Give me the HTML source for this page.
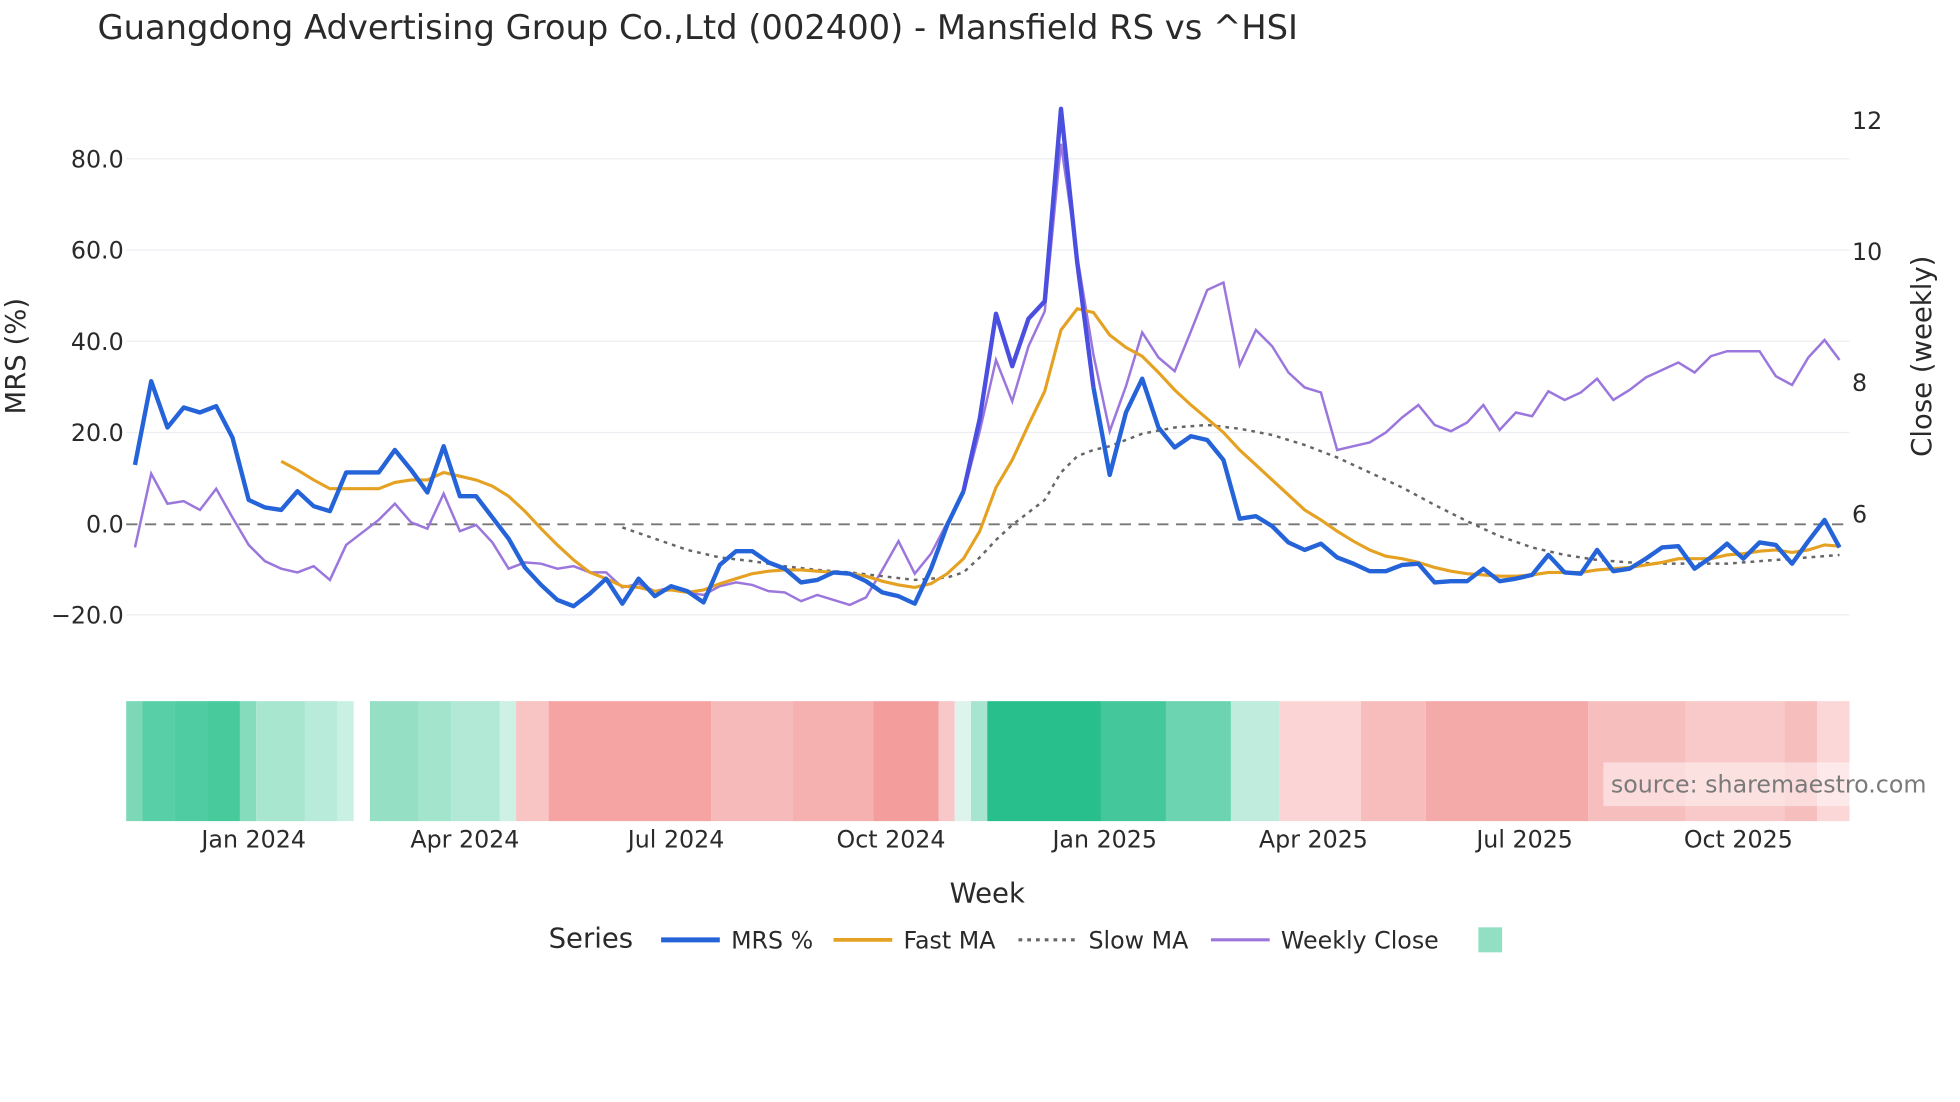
<!DOCTYPE html>
<html><head><meta charset="utf-8"><style>
html,body{margin:0;padding:0;background:#fff;width:1960px;height:1102px;overflow:hidden}
svg{display:block}
text{font-family:"DejaVu Sans","Liberation Sans",sans-serif;fill:#2a2a2a}
</style></head><body>
<svg width="1960" height="1102" viewBox="0 0 1568.4 881.7" xmlns="http://www.w3.org/2000/svg">
<rect width="1569" height="882" fill="#fff"/>
<text x="78" y="31" font-size="27" fill="#333">Guangdong Advertising Group Co.,Ltd (002400) - Mansfield RS vs ^HSI</text>
<g stroke="#eceef2" stroke-width="1">
<line x1="101" y1="127" x2="1480" y2="127"/><line x1="101" y1="200" x2="1480" y2="200"/>
<line x1="101" y1="273" x2="1480" y2="273"/><line x1="101" y1="346" x2="1480" y2="346"/>
<line x1="101" y1="492" x2="1480" y2="492"/></g>
<line x1="101" y1="419.5" x2="1480" y2="419.5" stroke="#777" stroke-width="1.5" stroke-dasharray="9,6"/>
<g font-size="19" text-anchor="end">
<text x="99" y="134">80.0</text><text x="99" y="207">60.0</text><text x="99" y="280">40.0</text>
<text x="99" y="353">20.0</text><text x="99" y="426">0.0</text><text x="99" y="499">−20.0</text></g>
<g font-size="19"><text x="1482" y="103">12</text><text x="1482" y="208">10</text><text x="1482" y="313">8</text><text x="1482" y="418">6</text></g>
<text transform="translate(20,285) rotate(-90)" font-size="22" text-anchor="middle">MRS (%)</text>
<text transform="translate(1545,285) rotate(-90)" font-size="22" text-anchor="middle">Close (weekly)</text>
<g>
<rect x="101" y="561" width="13" height="96" fill="#7dd8b8"/>
<rect x="114" y="561" width="26" height="96" fill="#58cfa7"/>
<rect x="140" y="561" width="26" height="96" fill="#4fcca1"/>
<rect x="166" y="561" width="26" height="96" fill="#48ca9d"/>
<rect x="192" y="561" width="13" height="96" fill="#85dcbc"/>
<rect x="205" y="561" width="39" height="96" fill="#a8e6d0"/>
<rect x="244" y="561" width="26" height="96" fill="#b8ebda"/>
<rect x="270" y="561" width="13" height="96" fill="#c8f0e3"/>
<rect x="296" y="561" width="39" height="96" fill="#95e0c5"/>
<rect x="335" y="561" width="26" height="96" fill="#a2e4cc"/>
<rect x="361" y="561" width="39" height="96" fill="#b2e9d6"/>
<rect x="400" y="561" width="13" height="96" fill="#cdf1e5"/>
<rect x="413" y="561" width="26" height="96" fill="#f8c4c4"/>
<rect x="439" y="561" width="130" height="96" fill="#f5a3a3"/>
<rect x="569" y="561" width="65" height="96" fill="#f7baba"/>
<rect x="634" y="561" width="65" height="96" fill="#f5b0b0"/>
<rect x="699" y="561" width="52" height="96" fill="#f49d9d"/>
<rect x="751" y="561" width="13" height="96" fill="#f8c8c8"/>
<rect x="764" y="561" width="13" height="96" fill="#dcf4ec"/>
<rect x="777" y="561" width="13" height="96" fill="#a8e5d0"/>
<rect x="790" y="561" width="91" height="96" fill="#28bf8d"/>
<rect x="881" y="561" width="52" height="96" fill="#44c89b"/>
<rect x="933" y="561" width="52" height="96" fill="#6cd4b0"/>
<rect x="985" y="561" width="39" height="96" fill="#c0ecdd"/>
<rect x="1024" y="561" width="65" height="96" fill="#fbd5d5"/>
<rect x="1089" y="561" width="52" height="96" fill="#f7bcbc"/>
<rect x="1141" y="561" width="130" height="96" fill="#f5aaaa"/>
<rect x="1271" y="561" width="78" height="96" fill="#f7bebe"/>
<rect x="1349" y="561" width="79" height="96" fill="#f9c8c8"/>
<rect x="1428" y="561" width="26" height="96" fill="#f7bebe"/>
<rect x="1454" y="561" width="26" height="96" fill="#fbd7d7"/>
</g>
<rect x="1283" y="610" width="262" height="35" fill="#fff" fill-opacity="0.45"/>
<text x="1289" y="634" font-size="19" style="fill:#7a7a7a">source: sharemaestro.com</text>
<g font-size="19" text-anchor="middle">
<text x="203" y="678">Jan 2024</text><text x="372" y="678">Apr 2024</text><text x="541" y="678">Jul 2024</text>
<text x="713" y="678">Oct 2024</text><text x="884" y="678">Jan 2025</text><text x="1051" y="678">Apr 2025</text>
<text x="1220" y="678">Jul 2025</text><text x="1391" y="678">Oct 2025</text></g>
<text x="790" y="722" font-size="22" text-anchor="middle">Week</text>
<polyline fill="none" stroke="#9b77dd" stroke-width="2" points="108,438 121,379 134,403 147,401 160,408 173,391 186,414 199,436 212,449 225,455 238,458 251,453 264,464 277,436 290,426 303,416 316,403 329,418 342,423 355,395 368,425 381,420 394,434 407,455 420,450 433,451 446,455 459,453 472,458 485,458 498,470 511,467 524,473 537,470 550,474 563,476 576,469 589,466 602,468 615,473 628,474 641,481 654,476 667,480 680,484 693,478 706,456 719,433 732,459 745,443 758,418 771,395 784,345 797,288 810,321 823,277 836,249 849,115 862,205 875,284 888,345 901,309 914,266 927,286 940,297 953,265 966,232 979,226 992,292 1005,264 1018,277 1031,298 1044,310 1057,314 1070,360 1083,357 1096,354 1109,346 1122,334 1135,324 1148,340 1161,345 1174,338 1187,324 1200,344 1213,330 1226,333 1239,313 1252,320 1265,314 1278,303 1291,320 1304,312 1317,302 1330,296 1343,290 1356,298 1369,285 1382,281 1395,281 1408,281 1421,301 1434,308 1447,286 1460,272 1472,288"/>
<polyline fill="none" stroke="#666" stroke-width="2" stroke-dasharray="3,4" points="498,422 524,431 550,440 576,446 602,449 628,453 654,456 680,458 706,461 732,464 758,462 771,458 784,446 797,432 810,420 823,410 836,400 849,378 862,365 875,360 888,357 901,352 914,347 940,342 966,340 992,343 1018,348 1044,356 1070,366 1096,378 1122,390 1148,404 1174,417 1200,429 1226,438 1252,444 1278,448 1304,450 1330,451 1356,451 1382,451 1408,449 1434,447 1472,444"/>
<polyline fill="none" stroke="#e5a121" stroke-width="2.5" points="225,369 238,376 251,384 264,391 277,391 290,391 303,391 316,386 329,384 342,384 355,378 368,381 381,384 394,389 407,397 420,409 433,423 446,436 459,448 472,458 485,463 498,469 511,470 524,473 537,472 550,474 563,472 576,467 589,463 602,459 615,457 628,456 641,456 654,457 667,458 680,459 693,461 706,465 719,468 732,470 745,467 758,459 771,447 784,425 797,390 810,368 823,340 836,313 849,264 862,247 875,250 888,268 901,278 914,285 927,298 940,312 953,324 966,335 979,346 992,360 1005,372 1018,384 1031,396 1044,408 1057,416 1070,425 1083,433 1096,440 1109,445 1122,447 1135,450 1148,454 1161,457 1174,459 1187,460 1200,461 1213,461 1226,460 1239,458 1252,458 1265,458 1278,456 1291,455 1304,454 1317,452 1330,450 1343,447 1356,447 1369,447 1382,444 1395,443 1408,441 1421,440 1434,442 1447,440 1460,436 1472,437"/>
<polyline fill="none" stroke="#2563d9" stroke-width="3.5" stroke-linejoin="round" points="108,372 121,305 134,342 147,326 160,330 173,325 186,350 199,400 212,406 225,408 238,393 251,405 264,409 277,378 290,378 303,378 316,360 329,376 342,394 355,357 368,397 381,397 394,414 407,431 420,454 433,468 446,480 459,485 472,475 485,463 498,483 511,463 524,477 537,469 550,473 563,482 576,452 589,441 602,441 615,450 628,455 641,466 654,464 667,458 680,459 693,465 706,474 719,477 732,483 745,455 758,420 771,393"/>
<polyline fill="none" stroke="#4b4fe0" stroke-width="3.5" stroke-linejoin="round" points="771,393 784,335 797,251 810,293 823,255 836,241 849,87 862,210 875,310"/>
<polyline fill="none" stroke="#2563d9" stroke-width="3.5" stroke-linejoin="round" points="875,310 888,380 901,330 914,303 927,342 940,358 953,349 966,352 979,368 992,415 1005,413 1018,421 1031,434 1044,440 1057,435 1070,446 1083,451 1096,457 1109,457 1122,452 1135,451 1148,466 1161,465 1174,465 1187,455 1200,465 1213,463 1226,460 1239,444 1252,458 1265,459 1278,440 1291,457 1304,455 1317,447 1330,438 1343,437 1356,455 1369,446 1382,435 1395,447 1408,434 1421,436 1434,451 1447,433 1460,416 1472,438"/>
<text x="439" y="758" font-size="22">Series</text>
<line x1="529" y1="752" x2="576" y2="752" stroke="#2563d9" stroke-width="4"/>
<text x="585" y="759" font-size="19">MRS %</text>
<line x1="667" y1="752" x2="714" y2="752" stroke="#e5a121" stroke-width="3"/>
<text x="723" y="759" font-size="19">Fast MA</text>
<line x1="815" y1="752" x2="862" y2="752" stroke="#666" stroke-width="2.5" stroke-dasharray="3,4"/>
<text x="871" y="759" font-size="19">Slow MA</text>
<line x1="969" y1="752" x2="1016" y2="752" stroke="#9b77dd" stroke-width="2.5"/>
<text x="1025" y="759" font-size="19">Weekly Close</text>
<rect x="1183" y="742" width="19" height="20" fill="#93dfc4"/>
</svg>
</body></html>
